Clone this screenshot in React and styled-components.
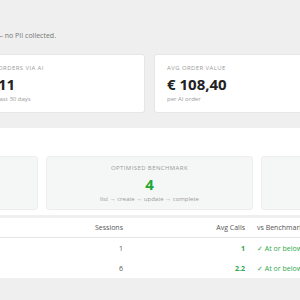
import React from "react";
import styled, { createGlobalStyle } from "styled-components";

const GlobalStyle = createGlobalStyle`
  html, body {
    margin: 0;
    padding: 0;
    background: #efefef;
    overflow: hidden;
    font-family: "Open Sans", "Noto Sans", sans-serif;
  }
`;

const Page = styled.div`
  width: 667px;
  margin-left: -184px;
  padding-top: 31px;
`;

const Intro = styled.p`
  margin: 0;
  width: 240px;
  text-align: right;
  font-size: 7px;
  line-height: 10px;
  color: #777;
`;

const Cards = styled.div`
  display: grid;
  grid-template-columns: repeat(4, 1fr);
  gap: 9px;
  margin-top: 13px;
`;

const Card = styled.div`
  background: #fff;
  border: 1px solid #e6e6e6;
  border-radius: 3px;
  padding: 9px 12px 9px;
`;

const Label = styled.div`
  font-size: 6px;
  line-height: 8px;
  letter-spacing: 0.4px;
  text-transform: uppercase;
  color: #9a9a9a;
`;

const Value = styled.div`
  margin-top: 3px;
  font-size: 15px;
  line-height: 18px;
  font-weight: 700;
  color: ${({ $color }) => $color || "#222"};
`;

const Sub = styled.div`
  margin-top: 2px;
  font-size: 6px;
  line-height: 8px;
  color: #9a9a9a;
`;

const Panel = styled.section`
  margin-top: 15px;
  background: #fff;
  border-radius: 3px;
  padding: 8px 14px 5px;
`;

const PanelTitle = styled.h3`
  margin: 0 0 12px;
  font-size: 8px;
  line-height: 8px;
  font-weight: 600;
  color: #333;
`;

const Boxes = styled.div`
  display: grid;
  grid-template-columns: repeat(3, 1fr);
  gap: 8px;
`;

const Box = styled.div`
  background: #f5f6f6;
  border: 1px solid #eeeeee;
  border-radius: 3px;
  padding: 7px 8px 6px;
  text-align: center;
`;

const Table = styled.div`
  margin-top: 3px;
  background: #fff;
  border-radius: 3px;
  font-size: 7px;
  color: #555;
`;

const Row = styled.div`
  display: grid;
  grid-template-columns: 200px 83px 110px 1fr;
  gap: 12px;
  align-items: center;
  padding: 0 12px;
  height: ${({ $head }) => ($head ? "19px" : "20px")};
  border-bottom: ${({ $head }) => ($head ? "1px solid #e6e6e6" : "none")};
`;

const Cell = styled.div`
  text-align: ${({ $right }) => ($right ? "right" : "left")};
  color: ${({ $green }) => ($green ? "#2ea84a" : "inherit")};
  font-weight: ${({ $bold }) => ($bold ? 700 : 400)};
  white-space: nowrap;
`;

const rows = [
  { name: "Express checkout", sessions: 1, calls: "1" },
  { name: "Standard checkout", sessions: 6, calls: "2.2" },
];

export default function App() {
  return (
    <>
      <GlobalStyle />
      <Page>
        <Intro>Aggregated agent activity only — no PII collected.</Intro>
        <Cards>
          <Card>
            <Label>AI sessions</Label>
            <Value>38</Value>
            <Sub>last 30 days</Sub>
          </Card>
          <Card>
            <Label>Orders via AI</Label>
            <Value>11</Value>
            <Sub>last 30 days</Sub>
          </Card>
          <Card>
            <Label>Avg order value</Label>
            <Value>€ 108,40</Value>
            <Sub>per AI order</Sub>
          </Card>
          <Card>
            <Label>Conversion</Label>
            <Value>28,9%</Value>
            <Sub>sessions to orders</Sub>
          </Card>
        </Cards>
        <Panel>
          <PanelTitle>Call efficiency</PanelTitle>
          <Boxes>
            <Box>
              <Label>Avg calls per order</Label>
              <Value>2</Value>
              <Sub>all agents</Sub>
            </Box>
            <Box>
              <Label>Optimised benchmark</Label>
              <Value $color="#1fa834">4</Value>
              <Sub>list → create → update → complete</Sub>
            </Box>
            <Box>
              <Label>Within benchmark</Label>
              <Value>100%</Value>
              <Sub>of agents</Sub>
            </Box>
          </Boxes>
        </Panel>
        <Table>
          <Row $head>
            <Cell>Agent</Cell>
            <Cell $right>Sessions</Cell>
            <Cell $right>Avg Calls</Cell>
            <Cell>vs Benchmark</Cell>
          </Row>
          {rows.map((r) => (
            <Row key={r.name}>
              <Cell>{r.name}</Cell>
              <Cell $right>{r.sessions}</Cell>
              <Cell $right $green $bold>
                {r.calls}
              </Cell>
              <Cell $green>✓ At or below target</Cell>
            </Row>
          ))}
        </Table>
      </Page>
    </>
  );
}
